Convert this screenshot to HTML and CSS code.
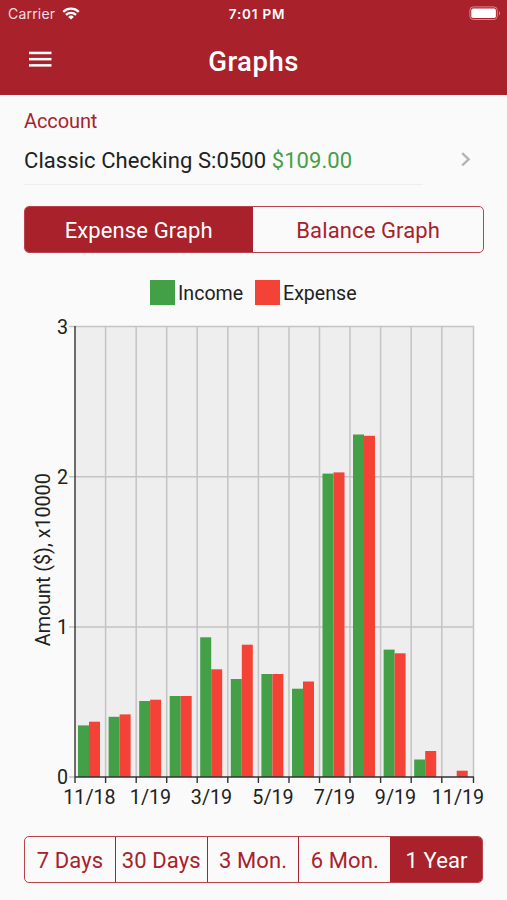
FILE: index.html
```html
<!DOCTYPE html>
<html>
	<head>
		<meta charset="UTF-8">
		<title>Graphs</title>
		<link rel="stylesheet" href="styles.css">
	</head>
	<body>
		<header class="header">
			<div class="status">
				<div class="carrier">
					<span>Carrier</span>
					<svg width="18" height="13" viewBox="0 0 18 13" fill="none" stroke="#fff" stroke-width="2.3">
						<path d="M1.2 4.8a11.2 11.2 0 0 1 15.6 0"/>
						<path d="M4 7.9a7.2 7.2 0 0 1 10 0"/>
						<path d="M9 12.6L6.2 9.9a4 4 0 0 1 5.6 0z" fill="#fff" stroke="none"/>
					</svg>
				</div>
				<div class="time">7:01 PM</div>
				<svg class="battery" width="32" height="15" viewBox="0 0 32 15">
					<rect x="0.9" y="0.9" width="27.4" height="12.6" rx="3.4" fill="none" stroke="#d7868c"/>
					<rect x="2.3" y="2.6" width="24.6" height="9.4" rx="1.8" fill="#fff"/>
					<path d="M30 5.2c1.4.6 1.4 3.6 0 4.2z" fill="#d7868c"/>
				</svg>
			</div>
			<div class="navbar">
				<svg class="menu" width="23" height="17" viewBox="0 0 23 17" fill="#fff">
					<rect x="0" y="0.7" width="22.5" height="2.5"/>
					<rect x="0" y="6.9" width="22.5" height="2.5"/>
					<rect x="0" y="13.1" width="22.5" height="2.5"/>
				</svg>
				<h1 class="title">Graphs</h1>
			</div>
		</header>
		<main class="content">
			<div class="label">Account</div>
			<div class="account">
				<div class="account_name">Classic Checking S:0500 <span class="amount">$109.00</span></div>
				<svg width="10" height="16" viewBox="0 0 10 16" fill="none" stroke="#b3b3b3" stroke-width="2.3">
					<path d="M1.2 1.2l6.5 6.1l-6.5 6.1"/>
				</svg>
			</div>
			<div class="tabs">
				<div class="tab active">Expense Graph</div>
				<div class="tab">Balance Graph</div>
			</div>
			<div class="legend">
				<div class="key income"></div><span class="income_text">Income</span>
				<div class="key expense"></div><span>Expense</span>
			</div>
			<svg class="chart" width="507" height="504" viewBox="0 312 507 504">
				<rect x="75" y="326.5" width="398.5" height="450.5" fill="#eee"/>
				<!-- grid -->
				<path class="grid" d="M69 326.5H474M69 476.8H474M69 627H474M69 777H75M105.6 326V777M136.2 326V777M166.7 326V777M197.2 326V777M227.8 326V777M258.4 326V777M289 326V777M319.5 326V777M350 326V777M380.6 326V777M411.2 326V777M441.8 326V777M473.5 326V777"/>
				<!-- income -->
				<g fill="#43a047">
					<rect x="78" y="725.4" width="11" height="51.6"/>
					<rect x="108.6" y="716.8" width="11" height="60.2"/>
					<rect x="139.2" y="701" width="11" height="76"/>
					<rect x="169.7" y="696" width="11" height="81"/>
					<rect x="200.2" y="637.3" width="11" height="139.7"/>
					<rect x="230.8" y="679" width="11" height="98"/>
					<rect x="261.4" y="674" width="11" height="103"/>
					<rect x="292" y="688.7" width="11" height="88.3"/>
					<rect x="322.5" y="473.6" width="11" height="303.4"/>
					<rect x="353" y="434.5" width="11" height="342.5"/>
					<rect x="383.6" y="649.6" width="11" height="127.4"/>
					<rect x="414.2" y="759.5" width="11" height="17.5"/>
				</g>
				<!-- expense -->
				<g fill="#f44336">
					<rect x="89" y="721.7" width="11" height="55.3"/>
					<rect x="119.6" y="714.4" width="11" height="62.6"/>
					<rect x="150.1" y="699.7" width="11" height="77.3"/>
					<rect x="180.7" y="696" width="11" height="81"/>
					<rect x="211.2" y="669.3" width="11" height="107.7"/>
					<rect x="241.8" y="644.7" width="11" height="132.3"/>
					<rect x="272.4" y="674" width="11" height="103"/>
					<rect x="303" y="681.5" width="11" height="95.5"/>
					<rect x="333.5" y="472.4" width="11" height="304.6"/>
					<rect x="364" y="435.8" width="11" height="341.2"/>
					<rect x="394.6" y="653.3" width="11" height="123.7"/>
					<rect x="425.2" y="751" width="11" height="26"/>
					<rect x="456.7" y="770.7" width="11" height="6.3"/>
				</g>
				<!-- axis -->
				<path class="axis" d="M75 326V783M74.5 777H474M105.6 777v6M136.2 777v6M166.7 777v6M197.2 777v6M227.8 777v6M258.4 777v6M289 777v6M319.5 777v6M350 777v6M380.6 777v6M411.2 777v6M441.8 777v6M473.5 777v6"/>
				<g class="axis_text" text-anchor="end">
					<text x="68" y="333.5">3</text>
					<text x="68" y="483.5">2</text>
					<text x="68" y="634">1</text>
					<text x="68" y="784">0</text>
				</g>
				<g class="axis_text" text-anchor="middle">
					<text x="89.5" y="804">11/18</text>
					<text x="150.5" y="804">1/19</text>
					<text x="211.5" y="804">3/19</text>
					<text x="273" y="804">5/19</text>
					<text x="334.5" y="804">7/19</text>
					<text x="395.5" y="804">9/19</text>
					<text x="458" y="804">11/19</text>
					<text transform="translate(49.7 559.7) rotate(-90)">Amount ($), x10000</text>
				</g>
			</svg>
			<div class="tabs periods">
				<div class="tab">7 Days</div>
				<div class="tab">30 Days</div>
				<div class="tab">3 Mon.</div>
				<div class="tab">6 Mon.</div>
				<div class="tab active">1 Year</div>
			</div>
		</main>
	</body>
</html>
```
FILE: styles.css
```css
*{
	box-sizing: border-box;
}
body{
	margin: 0;
	height: 900px;
	background: #fafafa;
	color: #212121;
	font-family: Roboto, "Liberation Sans", sans-serif;
	overflow: hidden;
}
svg{
	display: block;
}
.header{
	height: 95px;
	background: #a9212b;
	color: #fff;
}
.status{
	display: grid;
	grid-template-columns: 1fr auto 1fr;
	align-items: center;
	height: 27px;
	padding: 0 1px 0 8px;
	font-family: Inter, sans-serif;
	font-size: 14px;
}
.carrier{
	display: flex;
	align-items: center;
	gap: 7px;
	letter-spacing: 0.2px;
	color: #f6dfe1;
}
.time{
	font-weight: 600;
	font-size: 13.5px;
	letter-spacing: 0.8px;
}
.battery{
	justify-self: end;
	margin-right: 5px;
}
.navbar{
	display: grid;
	grid-template-columns: 23px 1fr 23px;
	align-items: center;
	height: 68px;
	padding: 0 29px;
}
.menu{
	margin-bottom: 3px;
}
.title{
	margin: 0;
	text-align: center;
	font-size: 27.5px;
	font-weight: 500;
	letter-spacing: 0.5px;
}
.content{
	display: flex;
	flex-direction: column;
}
.label{
	margin: 14px 24px 1px;
	line-height: 24px;
	font-size: 20px;
	letter-spacing: -0.1px;
	color: #a9212b;
}
.account{
	display: flex;
	justify-content: space-between;
	align-items: center;
	height: 51px;
	padding: 0 36px 0 24px;
	font-size: 22px;
	letter-spacing: 0.07px;
}
.account_name{
	width: 399px;
	height: 51px;
	line-height: 53px;
	border-bottom: 1px solid #eee;
}
.amount{
	color: #43a047;
}
.tabs{
	display: flex;
	height: 47px;
	margin: 21px 23px 0 24px;
	border: 1px solid #b8434c;
	border-radius: 5px;
	overflow: hidden;
	font-size: 22px;
	letter-spacing: 0.12px;
	line-height: 48px;
	color: #a9212b;
}
.tab{
	flex: 1;
	text-align: center;
	white-space: nowrap;
}
.tab:first-child{
	flex: 0.99;
}
.tab + .tab{
	border-left: 1px solid #a9212b;
}
.tab.active{
	background: #a9212b;
	color: #fff;
}
.legend{
	display: flex;
	align-items: center;
	height: 25px;
	line-height: 27px;
	margin: 27px 0 0 150px;
	font-size: 19.6px;
}
.key{
	width: 25px;
	height: 25px;
	margin-right: 3px;
}
.income{
	background: #43a047;
}
.expense{
	background: #f44336;
}
.income_text{
	width: 77px;
}
.legend span{
	padding-top: 1px;
}
.chart{
	margin-top: 7px;
}
.grid{
	fill: none;
	stroke: #c4c4c4;
	stroke-width: 1.5;
}
.axis{
	fill: none;
	stroke: #333;
	stroke-width: 1.4;
}
.axis_text{
	font-size: 19.7px;
	fill: #212121;
}
.periods{
	margin-top: 20px;
	margin-right: 24px;
}
```
